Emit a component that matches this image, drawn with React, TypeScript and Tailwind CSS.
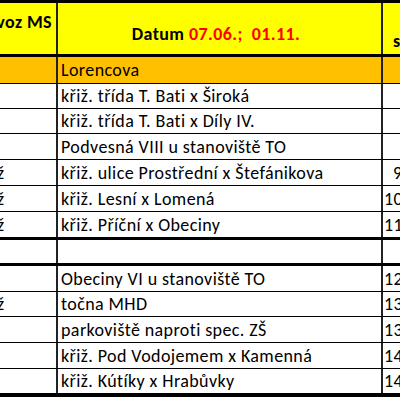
const rows1 = [
  { left: "", text: "křiž. třída T. Bati x Široká", time: "", h: "h-[24px]" },
  { left: "", text: "křiž. třída T. Bati x Díly IV.", time: "", h: "h-[24px]" },
  { left: "", text: "Podvesná VIII u stanoviště TO", time: "", h: "h-[25px]" },
  { left: "ž", text: "křiž. ulice Prostřední x Štefánikova", time: "9:55", h: "h-[25px]" },
  { left: "ž", text: "křiž. Lesní x Lomená", time: "10:25", h: "h-[25px]" },
  { left: "ž", text: "křiž. Příční x Obeciny", time: "11:00", h: "h-[25px]" },
];

const rows2 = [
  { left: "", text: "Obeciny VI u stanoviště TO", time: "12:30", h: "h-[25px]" },
  { left: "ž", text: "točna MHD", time: "13:00", h: "h-[24px]" },
  { left: "", text: "parkoviště naproti spec. ZŠ", time: "13:30", h: "h-[25px]" },
  { left: "", text: "křiž. Pod Vodojemem x Kamenná", time: "14:00", h: "h-[25px]" },
  { left: "", text: "křiž. Kútíky x Hrabůvky", time: "14:30", h: "h-[24px]" },
];

type Row = { left: string; text: string; time: string; h: string };

function DataRow({ row, last }: { row: Row; last?: boolean }) {
  // single digit hours sit one digit further right
  const pad = row.time.length === 4 ? "pl-[10px]" : "pl-[1px]";
  return (
    <div className={`flex ${last ? "" : "border-b border-black"}`}>
      <div className={`w-[58px] shrink-0 border-r-2 border-[#222] ${row.h} flex items-center overflow-hidden`}>
        <span className="-ml-[3px]">{row.left}</span>
      </div>
      <div className={`w-[325px] shrink-0 border-r-2 border-[#222] ${row.h} flex items-center pl-[3px] whitespace-nowrap`}>
        {row.text}
      </div>
      <div className={`w-[42px] shrink-0 ${row.h} flex items-center ${pad} whitespace-nowrap`}>{row.time}</div>
    </div>
  );
}

export default function App() {
  return (
    <div className="w-[400px] h-[400px] overflow-hidden bg-white">
      <div
        className="w-[425px] text-[18px] tracking-[0.4px] text-black leading-none"
        style={{ fontFamily: "Carlito, Lato, 'Liberation Sans', sans-serif" }}
      >
        {/* header */}
        <div className="flex border-t-[3px] border-b-[3px] border-black bg-[#ffff00] font-bold">
          <div className="w-[58px] shrink-0 h-[51px] border-r-2 border-[#222] overflow-hidden relative">
            <span className="absolute right-[4px] top-[10px] whitespace-nowrap">voz MS</span>
          </div>
          <div className="w-[325px] shrink-0 h-[51px] border-r-2 border-[#222] flex items-center justify-center pt-[10px] pr-[7px] whitespace-nowrap">
            Datum&nbsp;<span className="text-[#ff0000]">07.06.;&nbsp; 01.11.</span>
          </div>
          <div className="w-[42px] shrink-0 h-[51px] flex items-end pb-[4px] pl-[10px] whitespace-nowrap">svozu</div>
        </div>
        {/* Lorencova */}
        <div className="flex border-b border-black bg-[#ffc000]">
          <div className="w-[58px] shrink-0 h-[26px] border-r-2 border-[#222]" />
          <div className="w-[325px] shrink-0 h-[26px] border-r-2 border-[#222] flex items-center pl-[3px]">Lorencova</div>
          <div className="w-[42px] shrink-0 h-[26px]" />
        </div>
        {rows1.map((r, i) => (
          <DataRow key={i} row={r} last={i === rows1.length - 1} />
        ))}
        {/* empty separator row */}
        <div className="flex border-t-[3px] border-b-[3px] border-black">
          <div className="w-[58px] shrink-0 h-[23px] border-r-2 border-[#222]" />
          <div className="w-[325px] shrink-0 h-[23px] border-r-2 border-[#222]" />
          <div className="w-[42px] shrink-0 h-[23px]" />
        </div>
        {rows2.map((r, i) => (
          <DataRow key={i} row={r} last={i === rows2.length - 1} />
        ))}
        <div className="border-t-[4px] border-black" />
      </div>
    </div>
  );
}
